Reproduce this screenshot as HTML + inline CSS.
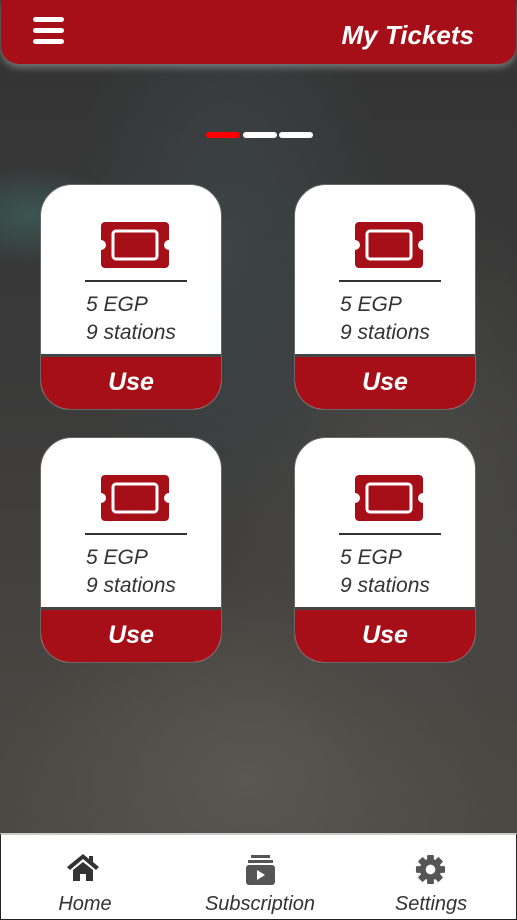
<!DOCTYPE html>
<html><head><style>
*{margin:0;padding:0;box-sizing:border-box}
body{width:517px;height:920px;overflow:hidden;position:relative;font-family:"Liberation Sans",sans-serif;
background:radial-gradient(ellipse 160px 300px at 230px 250px,#3c4446,transparent),
radial-gradient(ellipse 90px 50px at 30px 215px,#3a5652,transparent),
radial-gradient(ellipse 200px 300px at 420px 500px,#4a4a46,transparent),
radial-gradient(ellipse 250px 200px at 250px 780px,#5a5650,transparent),
linear-gradient(#333 0,#3a3a3a 40%,#4a4642 80%,#4e4a46 100%)}
.hdr{position:absolute;left:1px;top:0;width:515px;height:64px;background:#a60f18;border-radius:0 0 18px 18px;box-shadow:0 3px 8px rgba(200,200,200,.5)}
.hb{position:absolute;left:32px;width:31px;height:5px;background:#fff;border-radius:3px}
.title{position:absolute;right:42px;top:20px;color:#fff;font-style:italic;font-weight:bold;font-size:26px}
.dot{position:absolute;top:132px;width:34px;height:6px;border-radius:3px;background:#fff}
.card{position:absolute;width:182px;height:226px;background:#fff;border-radius:32px 32px 30px 30px;overflow:hidden;border:1px solid #666}
.icon{position:absolute;left:60px;top:37px}
.ln{position:absolute;left:44px;top:95px;width:102px;height:2px;background:#333}
.t{position:absolute;left:45px;font-style:italic;font-size:21px;color:#333}
.use{position:absolute;left:0;bottom:0;width:100%;height:55px;background:#a60f18;border-top:3px solid #444;color:#fff;font-style:italic;font-weight:bold;font-size:25px;text-align:center;line-height:50px}
.nav{position:absolute;left:0;top:833px;width:517px;height:87px;background:#fff;border:1px solid #222;border-top:2px solid #ccc}
.ni{position:absolute;top:58px;font-style:italic;font-size:20px;color:#333;transform:translateX(-50%)}
</style></head><body>
<div class="hdr"><div class="hb" style="top:17px"></div><div class="hb" style="top:28px"></div><div class="hb" style="top:39px"></div><div class="title">My Tickets</div></div>
<div class="dot" style="left:206px;background:#f00"></div><div class="dot" style="left:243px"></div><div class="dot" style="left:279px"></div>

<div class="card" style="left:40px;top:184px"><svg class="icon" width="68" height="46" viewBox="0 0 68 46"><path d="M4 0H64a4 4 0 0 1 4 4V18a5 5 0 0 0 0 10V42a4 4 0 0 1-4 4H4a4 4 0 0 1-4-4V28a5 5 0 0 0 0-10V4a4 4 0 0 1 4-4Z" fill="#a60f18"/><rect x="12" y="9" width="44" height="28" rx="3" fill="none" stroke="#fff" stroke-width="3"/></svg><div class="ln"></div><div class="t" style="top:108px">5 EGP</div><div class="t" style="top:136px">9 stations</div><div class="use">Use</div></div>
<div class="card" style="left:294px;top:184px"><svg class="icon" width="68" height="46" viewBox="0 0 68 46"><path d="M4 0H64a4 4 0 0 1 4 4V18a5 5 0 0 0 0 10V42a4 4 0 0 1-4 4H4a4 4 0 0 1-4-4V28a5 5 0 0 0 0-10V4a4 4 0 0 1 4-4Z" fill="#a60f18"/><rect x="12" y="9" width="44" height="28" rx="3" fill="none" stroke="#fff" stroke-width="3"/></svg><div class="ln"></div><div class="t" style="top:108px">5 EGP</div><div class="t" style="top:136px">9 stations</div><div class="use">Use</div></div>
<div class="card" style="left:40px;top:437px"><svg class="icon" width="68" height="46" viewBox="0 0 68 46"><path d="M4 0H64a4 4 0 0 1 4 4V18a5 5 0 0 0 0 10V42a4 4 0 0 1-4 4H4a4 4 0 0 1-4-4V28a5 5 0 0 0 0-10V4a4 4 0 0 1 4-4Z" fill="#a60f18"/><rect x="12" y="9" width="44" height="28" rx="3" fill="none" stroke="#fff" stroke-width="3"/></svg><div class="ln"></div><div class="t" style="top:108px">5 EGP</div><div class="t" style="top:136px">9 stations</div><div class="use">Use</div></div>
<div class="card" style="left:294px;top:437px"><svg class="icon" width="68" height="46" viewBox="0 0 68 46"><path d="M4 0H64a4 4 0 0 1 4 4V18a5 5 0 0 0 0 10V42a4 4 0 0 1-4 4H4a4 4 0 0 1-4-4V28a5 5 0 0 0 0-10V4a4 4 0 0 1 4-4Z" fill="#a60f18"/><rect x="12" y="9" width="44" height="28" rx="3" fill="none" stroke="#fff" stroke-width="3"/></svg><div class="ln"></div><div class="t" style="top:108px">5 EGP</div><div class="t" style="top:136px">9 stations</div><div class="use">Use</div></div>

<div class="nav">
<svg style="position:absolute;left:66px;top:18px" width="32" height="28" viewBox="0 0 32 28"><path d="M16 1 0 14l3 3L16 6l13 11 3-3-6-5V3h-4v3Z" fill="#333"/><path d="M6 17 16 9l10 8v11h-7v-7h-6v7H6Z" fill="#333"/></svg>
<svg style="position:absolute;left:245px;top:20px" width="29" height="30" viewBox="0 0 29 30"><rect x="5" y="0" width="19" height="3" fill="#555"/><rect x="2" y="5" width="25" height="3" fill="#555"/><rect x="0" y="10" width="29" height="20" rx="3" fill="#555"/><path d="M11 15v10l8-5Z" fill="#fff"/></svg>
<svg style="position:absolute;left:414px;top:19px" width="31" height="31" viewBox="-16 -16 32 32"><g fill="#555"><circle r="11"/><g id="g"><rect x="-3.5" y="-15" width="7" height="30" rx="1"/></g><use href="#g" transform="rotate(45)"/><use href="#g" transform="rotate(90)"/><use href="#g" transform="rotate(135)"/></g><circle r="5" fill="#fff"/></svg>
<div class="ni" style="left:84px">Home</div><div class="ni" style="left:259px">Subscription</div><div class="ni" style="left:430px">Settings</div>
</div>
</body></html>
